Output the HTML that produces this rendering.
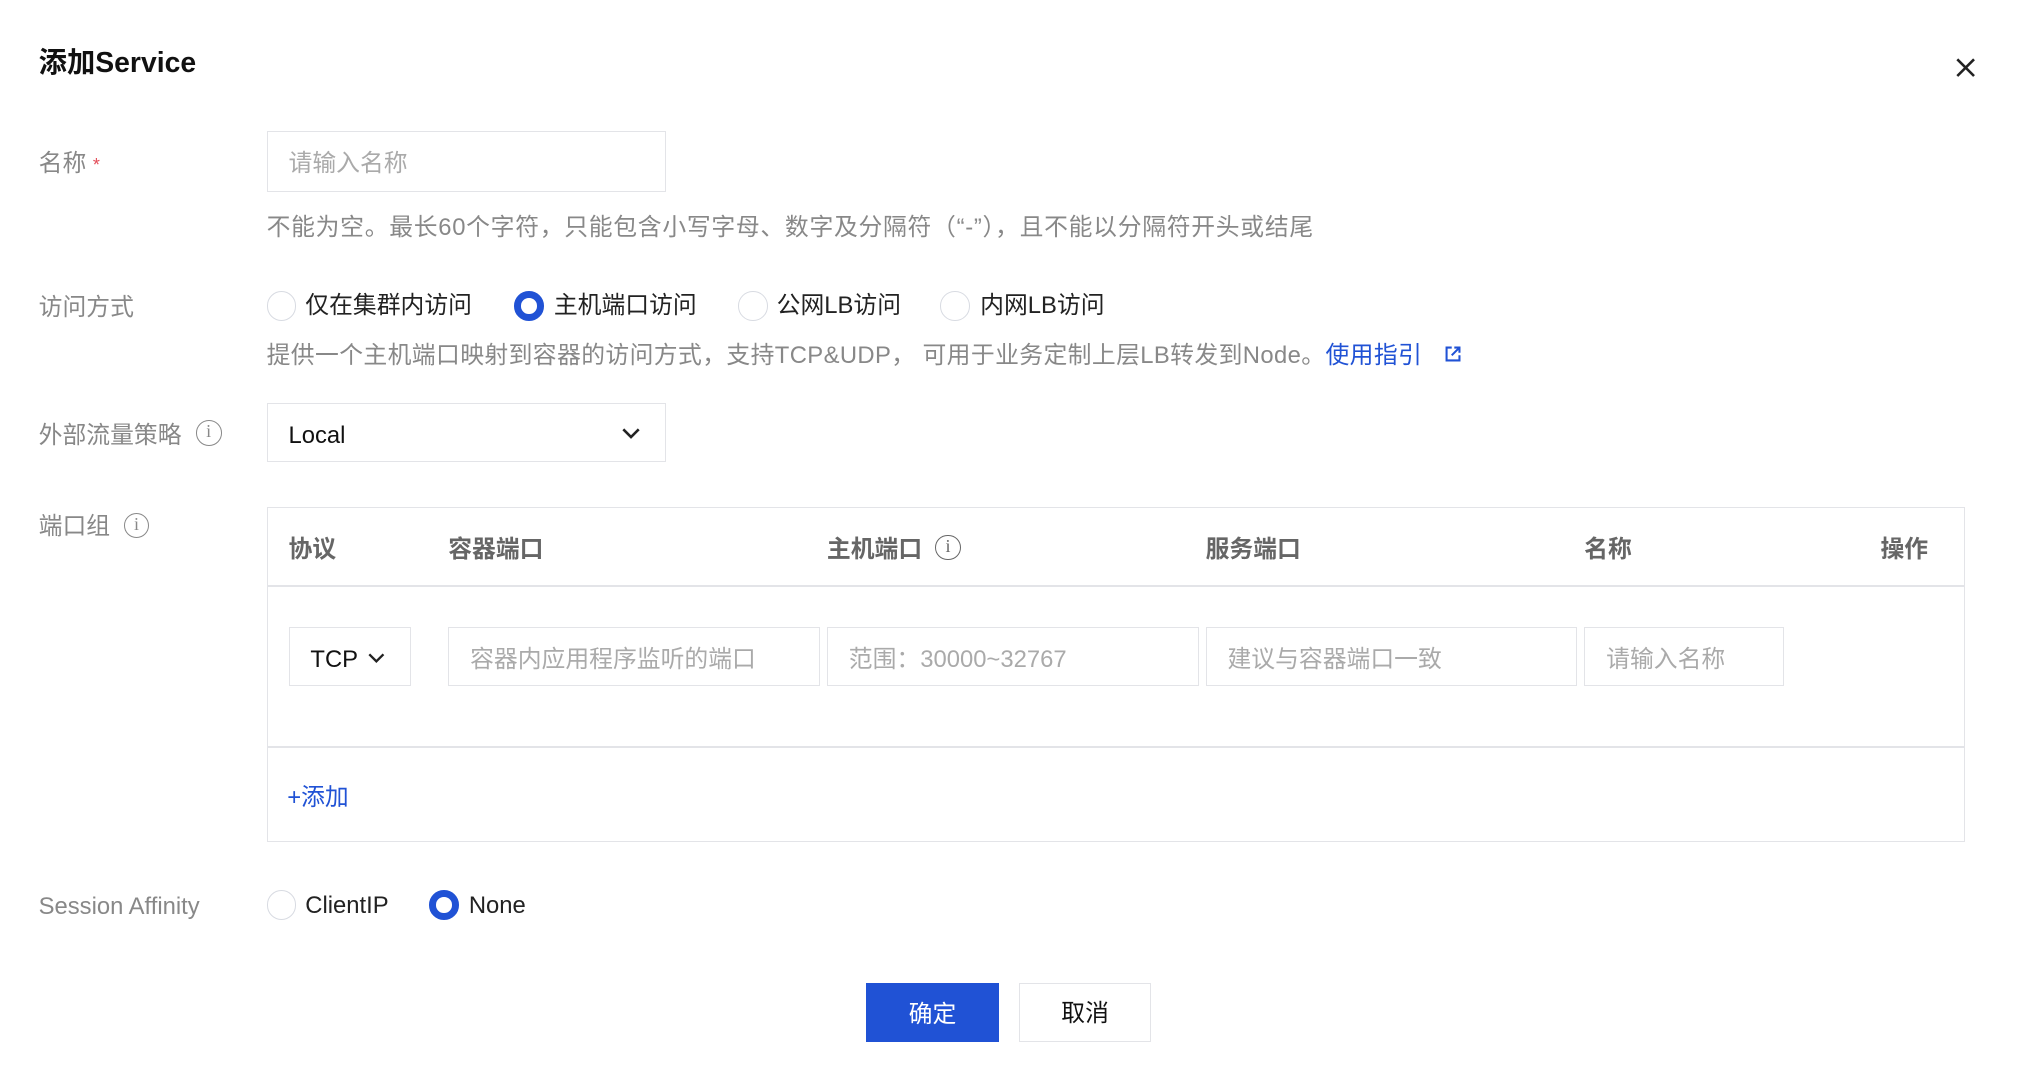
<!DOCTYPE html>
<html><head><meta charset="utf-8"><style>
html,body{margin:0;padding:0;background:#fff;}
body{width:2020px;height:1076px;overflow:hidden;}
#w{zoom:1.288;width:1568px;height:835px;position:relative;font-family:"Liberation Sans","Noto Sans CJK SC",sans-serif;font-size:18.5px;color:#222;}
.a{position:absolute;white-space:nowrap;line-height:1;margin-top:2px;}
.lab{color:#888;}
.help{color:#888;}
.box{position:absolute;border:1.5px solid #e3e4e8;box-sizing:border-box;background:#fff;}
.ph{color:#aaa;}
.r{position:absolute;width:23px;height:23px;border-radius:50%;box-sizing:border-box;border:1.5px solid #d8dbe2;background:#fff;margin-top:1px;}
.r.on{border:6px solid #2052d5;}
.info{position:absolute;width:20px;height:20px;border:1.5px solid #888;border-radius:50%;box-sizing:border-box;color:#888;font-size:14px;line-height:17px;text-align:center;font-family:"Liberation Serif",serif;margin-top:1px;}
.th{color:#666;font-weight:bold;}
.blue{color:#2052d5;}
</style></head><body><div id="w">
<div class="a" style="left:30px;top:36px;font-size:22px;font-weight:bold;color:#111;">添加Service</div>
<svg class="a" style="left:1519px;top:43px" width="15" height="15" viewBox="0 0 15 15"><path d="M1 1L14 14M14 1L1 14" stroke="#222" stroke-width="2"/></svg>

<div class="a lab" style="left:30px;top:116px;">名称 <span style="color:#e34d59;font-size:14px;">*</span></div>
<div class="box" style="left:207px;top:102px;width:310px;height:47px;"></div>
<div class="a ph" style="left:224px;top:116px;">请输入名称</div>
<div class="a help" style="left:207px;top:166px;letter-spacing:0.55px;">不能为空。最长60个字符，只能包含小写字母、数字及分隔符（“-”），且不能以分隔符开头或结尾</div>

<div class="a lab" style="left:30px;top:228px;">访问方式</div>
<div class="r" style="left:207px;top:225px;"></div><div class="a" style="left:237px;top:226px;">仅在集群内访问</div>
<div class="r on" style="left:399px;top:225px;"></div><div class="a" style="left:430px;top:226px;">主机端口访问</div>
<div class="r" style="left:573px;top:225px;"></div><div class="a" style="left:603px;top:226px;">公网LB访问</div>
<div class="r" style="left:730px;top:225px;"></div><div class="a" style="left:761px;top:226px;">内网LB访问</div>
<div class="a help" style="left:207px;top:265px;letter-spacing:0.3px;">提供一个主机端口映射到容器的访问方式，支持TCP&amp;UDP， 可用于业务定制上层LB转发到Node。<span class="blue">使用指引</span></div>
<svg class="a" style="left:1121px;top:266px" width="14" height="14" viewBox="0 0 14 14"><path d="M6 2H2V12H12V8M8 2H12V6M12 2L6 8" stroke="#2052d5" stroke-width="1.6" fill="none"/></svg>

<div class="a lab" style="left:30px;top:327px;">外部流量策略</div>
<div class="info" style="left:152px;top:325px;">i</div>
<div class="box" style="left:207px;top:313px;width:310px;height:46px;"></div>
<div class="a" style="left:224px;top:327px;color:#111;">Local</div>
<svg class="a" style="left:483px;top:330px" width="14" height="9" viewBox="0 0 14 9"><path d="M1 1L7 7L13 1" stroke="#222" stroke-width="2" fill="none"/></svg>

<div class="a lab" style="left:30px;top:398px;">端口组</div>
<div class="info" style="left:96px;top:397px;">i</div>
<div class="box" style="left:207px;top:394px;width:1319px;height:260px;"></div>
<div style="position:absolute;left:207px;top:454px;width:1319px;height:1.5px;background:#e3e4e8"></div>
<div style="position:absolute;left:207px;top:579px;width:1319px;height:1.5px;background:#e3e4e8"></div>
<div class="a th" style="left:224px;top:416px;">协议</div>
<div class="a th" style="left:348px;top:416px;">容器端口</div>
<div class="a th" style="left:642px;top:416px;">主机端口</div>
<div class="info" style="left:726px;top:414px;border-color:#666;color:#666;">i</div>
<div class="a th" style="left:936px;top:416px;">服务端口</div>
<div class="a th" style="left:1230px;top:416px;">名称</div>
<div class="a th" style="left:1460px;top:416px;">操作</div>

<div class="box" style="left:224px;top:487px;width:95px;height:46px;"></div>
<div class="a" style="left:241px;top:501px;color:#111;">TCP</div>
<svg class="a" style="left:286px;top:505px" width="13" height="8" viewBox="0 0 13 8"><path d="M1 1L6.5 6.5L12 1" stroke="#222" stroke-width="1.8" fill="none"/></svg>
<div class="box" style="left:348px;top:487px;width:289px;height:46px;"></div>
<div class="a ph" style="left:365px;top:501px;">容器内应用程序监听的端口</div>
<div class="box" style="left:642px;top:487px;width:289px;height:46px;"></div>
<div class="a ph" style="left:659px;top:501px;">范围：30000~32767</div>
<div class="box" style="left:936px;top:487px;width:288px;height:46px;"></div>
<div class="a ph" style="left:953px;top:501px;">建议与容器端口一致</div>
<div class="box" style="left:1230px;top:487px;width:155px;height:46px;"></div>
<div class="a ph" style="left:1247px;top:501px;">请输入名称</div>
<div class="a blue" style="left:223px;top:608px;">+添加</div>

<div class="a lab" style="left:30px;top:693px;">Session Affinity</div>
<div class="r" style="left:207px;top:690px;"></div><div class="a" style="left:237px;top:692px;">ClientIP</div>
<div class="r on" style="left:333px;top:690px;"></div><div class="a" style="left:364px;top:692px;">None</div>

<div style="position:absolute;left:672px;top:763px;width:104px;height:46px;background:#2052d5;color:#fff;text-align:center;line-height:49px;">确定</div>
<div class="box" style="left:791px;top:763px;width:103px;height:46px;text-align:center;line-height:46px;color:#111;">取消</div>
</div></body></html>
